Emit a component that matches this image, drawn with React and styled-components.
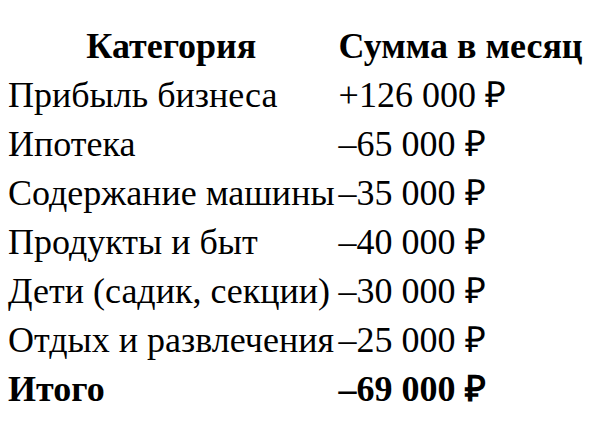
import React from "react";
import styled, { createGlobalStyle } from "styled-components";

const GlobalStyle = createGlobalStyle`
  body {
    margin: 0;
    background: #fff;
    font-family: "Liberation Serif", "Times New Roman", serif;
    color: #000;
  }
`;

const Wrapper = styled.div`
  padding: 21px 0 0 5px;
`;

const Table = styled.table`
  border-collapse: separate;
  border-spacing: 2px;
  font-size: 36px;
`;

const Th = styled.th`
  font-weight: bold;
  text-align: center;
  padding: 3px 1px;
  line-height: 41px;
  white-space: nowrap;
`;

const Td = styled.td`
  font-weight: ${(p) => (p.bold ? "bold" : "normal")};
  text-align: left;
  padding: 3px 1px;
  line-height: 41px;
  white-space: nowrap;
`;

const rows = [
  ["Прибыль бизнеса", "+126 000 ₽"],
  ["Ипотека", "–65 000 ₽"],
  ["Содержание машины", "–35 000 ₽"],
  ["Продукты и быт", "–40 000 ₽"],
  ["Дети (садик, секции)", "–30 000 ₽"],
  ["Отдых и развлечения", "–25 000 ₽"],
];

export default function App() {
  return (
    <Wrapper>
      <GlobalStyle />
      <Table>
        <thead>
          <tr>
            <Th>Категория</Th>
            <Th>Сумма в месяц</Th>
          </tr>
        </thead>
        <tbody>
          {rows.map(([name, sum]) => (
            <tr key={name}>
              <Td>{name}</Td>
              <Td>{sum}</Td>
            </tr>
          ))}
          <tr>
            <Td bold>Итого</Td>
            <Td bold>–69 000 ₽</Td>
          </tr>
        </tbody>
      </Table>
    </Wrapper>
  );
}
